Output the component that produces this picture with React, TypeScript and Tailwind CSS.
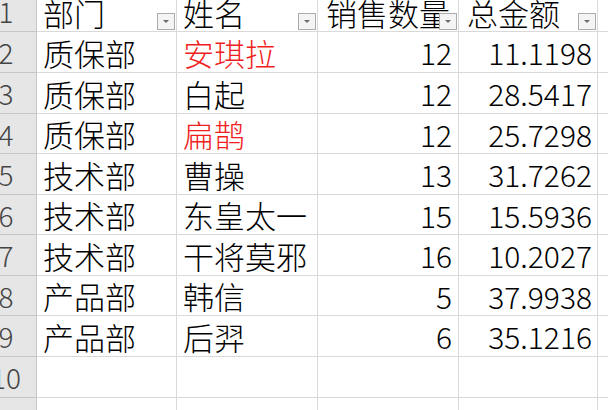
import React from 'react';

type Row = {
  n: number;
  dept: string;
  name: string;
  qty: number;
  total: string;
  red?: boolean;
};

const rows: Row[] = [
  { n: 2, dept: '质保部', name: '安琪拉', qty: 12, total: '11.1198', red: true },
  { n: 3, dept: '质保部', name: '白起', qty: 12, total: '28.5417' },
  { n: 4, dept: '质保部', name: '扁鹊', qty: 12, total: '25.7298', red: true },
  { n: 5, dept: '技术部', name: '曹操', qty: 13, total: '31.7262' },
  { n: 6, dept: '技术部', name: '东皇太一', qty: 15, total: '15.5936' },
  { n: 7, dept: '技术部', name: '干将莫邪', qty: 16, total: '10.2027' },
  { n: 8, dept: '产品部', name: '韩信', qty: 5, total: '37.9938' },
  { n: 9, dept: '产品部', name: '后羿', qty: 6, total: '35.1216' },
];

// row heights (bottom border included) so the grid lines land on whole pixels
const heights = ['h-[41px]', 'h-[41px]', 'h-[40px]', 'h-[41px]', 'h-[40px]', 'h-[41px]', 'h-[40px]', 'h-[41px]'];

const FilterButton = () => (
  <div className="absolute bottom-[1px] right-[1px] w-[18px] h-[17px] border border-[#ababab] bg-[#f4f4f4] flex items-center justify-center">
    <div className="w-0 h-0 border-l-[3px] border-r-[3px] border-t-[3px] border-l-transparent border-r-transparent border-t-[#6b6b6b]" />
  </div>
);

const RowHead: React.FC<{ n?: number }> = ({ n }) => (
  <div className="w-[37px] shrink-0 bg-[#e6e6e6] border-r border-b border-[#c6c6c6] overflow-hidden flex items-center">
    <div className="w-[62px] -ml-[25px] shrink-0 text-center text-[28px] leading-none text-[#444]">{n}</div>
  </div>
);

const cell =
  'relative shrink-0 border-r border-b border-[#d9d9d9] flex items-center leading-none whitespace-nowrap';

export default function App() {
  return (
    <div
      className="w-[608px] h-[410px] overflow-hidden bg-white text-black font-light"
      style={{ fontFamily: '"Noto Sans CJK SC", "Noto Sans", sans-serif' }}
    >
      <div className="-mt-[10px]">
        {/* header row */}
        <div className="flex h-[42px]">
          <RowHead n={1} />
          <div className={`${cell} w-[140px] pl-[6px] pt-[4px] text-[31px]`}>
            部门
            <FilterButton />
          </div>
          <div className={`${cell} w-[141px] pl-[6px] pt-[4px] text-[31px]`}>
            姓名
            <FilterButton />
          </div>
          <div className={`${cell} w-[141px] pl-[8px] pt-[4px] text-[31px] overflow-hidden`}>
            销售数量
            <FilterButton />
          </div>
          <div className={`${cell} w-[139px] pl-[8px] pt-[4px] text-[31px]`}>
            总金额
            <FilterButton />
          </div>
          <div className="flex-1 border-b border-[#d9d9d9]" />
        </div>

        {rows.map((r, i) => (
          <div key={r.n} className={`flex ${heights[i]}`}>
            <RowHead n={r.n} />
            <div className={`${cell} w-[140px] pl-[6px] text-[31px]`}>{r.dept}</div>
            <div className={`${cell} w-[141px] pl-[6px] text-[31px] ${r.red ? 'text-[#f01e1e]' : ''}`}>
              {r.name}
            </div>
            <div className={`${cell} w-[141px] justify-end pr-[6px] text-[30px]`}>{r.qty}</div>
            <div className={`${cell} w-[139px] justify-end pr-[5px] text-[30px]`}>{r.total}</div>
            <div className="flex-1 border-b border-[#d9d9d9]" />
          </div>
        ))}

        <div className="flex h-[41px]">
          <RowHead n={10} />
          <div className={`${cell} w-[140px]`} />
          <div className={`${cell} w-[141px]`} />
          <div className={`${cell} w-[141px]`} />
          <div className={`${cell} w-[139px]`} />
          <div className="flex-1 border-b border-[#d9d9d9]" />
        </div>

        <div className="flex h-[41px]">
          <RowHead n={11} />
          <div className={`${cell} w-[140px]`} />
          <div className={`${cell} w-[141px]`} />
          <div className={`${cell} w-[141px]`} />
          <div className={`${cell} w-[139px]`} />
          <div className="flex-1 border-b border-[#d9d9d9]" />
        </div>
      </div>
    </div>
  );
}
